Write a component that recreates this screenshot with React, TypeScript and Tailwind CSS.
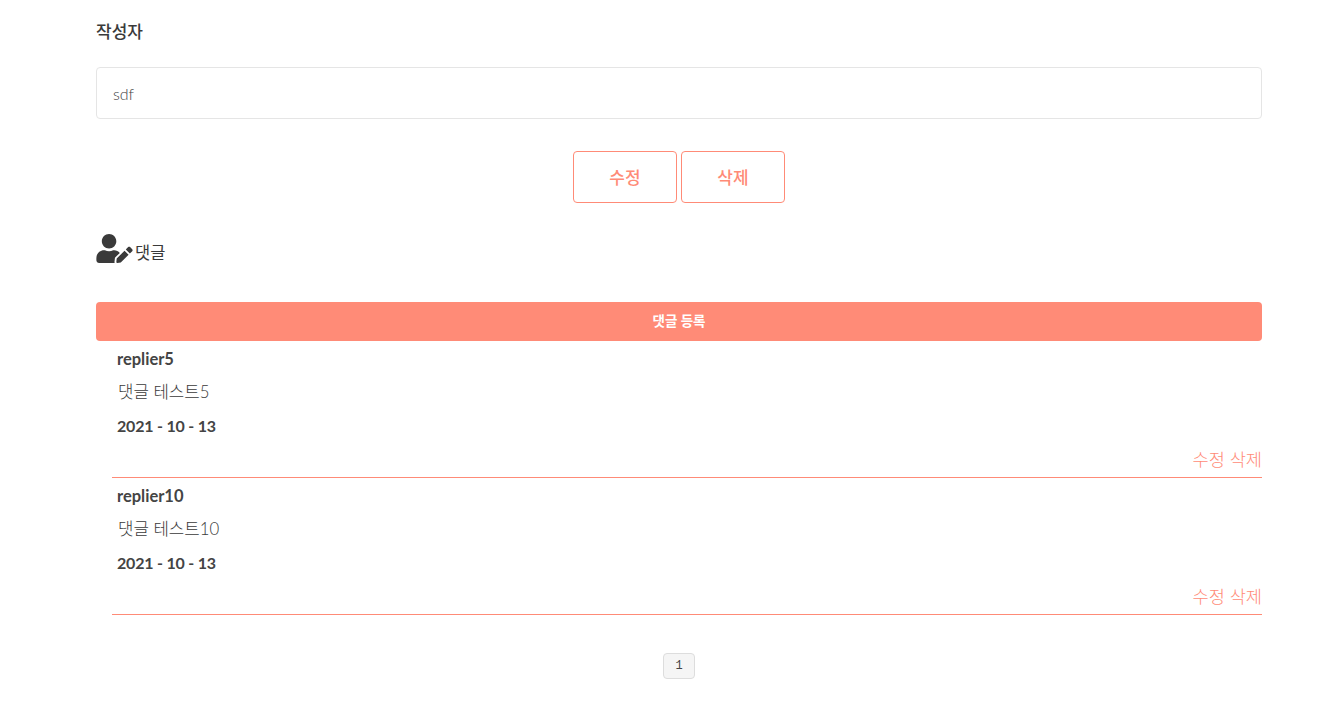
import { FaUserEdit } from 'react-icons/fa';

const font = "font-['Lato','Noto_Sans_CJK_KR',sans-serif]";

const replies = [
  { id: 5, writer: 'replier5', content: '댓글 테스트5', date: '2021 - 10 - 13' },
  { id: 10, writer: 'replier10', content: '댓글 테스트10', date: '2021 - 10 - 13' },
];

function ReplyItem({ writer, content, date }: { writer: string; content: string; date: string }) {
  return (
    <div className="ml-4 h-[137px] border-b border-[#ff8b77] flex flex-col">
      <p className="pl-[5px] mt-[8px] h-[20px] leading-[20px] text-[16.5px] font-bold text-[#444]">{writer}</p>
      <p className="pl-[6px] mt-[13px] h-[20px] leading-[20px] text-[16.8px] font-light text-[#3a3a3a]">{content}</p>
      <p className="pl-[5px] mt-[14px] h-[20px] leading-[20px] text-[16px] tracking-[-0.2px] font-bold text-[#444]">{date}</p>
      <div className="mt-[14px] h-[20px] leading-[20px] text-right text-[17.6px] font-light text-[#ff8b77]">
        <span>수정</span> <span>삭제</span>
      </div>
    </div>
  );
}

export default function App() {
  return (
    <div className={`${font} h-[702px] overflow-hidden bg-white pl-[96px] pr-[82px] text-[#3a3a3a]`}>
      <h3 className="pt-[22px] h-[67px] text-[17px] leading-[20px] font-medium text-[#3a3a3a]">작성자</h3>
      <div className="h-[52px] rounded border border-[#e5e5e5] px-4 pt-[1px] flex items-center text-[16px] font-light text-[#444]">
        sdf
      </div>
      <div className="mt-8 flex justify-center gap-1">
        <button className="w-[104px] h-[52px] rounded border border-[#ff8b77] pt-[1px] text-[17px] font-medium text-[#ff8b77]">수정</button>
        <button className="w-[104px] h-[52px] rounded border border-[#ff8b77] pt-[1px] text-[17px] font-medium text-[#ff8b77]">삭제</button>
      </div>
      <div className="mt-[30px] h-[30px] flex items-center gap-[2px]">
        <FaUserEdit className="w-[37px] h-[29px] text-[#3a3a3a]" />
        <span className="self-end leading-[20px] text-[16.5px] font-normal text-[#3a3a3a]">댓글</span>
      </div>
      <button className="mt-[39px] block w-full h-[39px] rounded bg-[#ff8b77] text-[13.5px] font-bold text-white">댓글 등록</button>
      {replies.map((r) => (
        <ReplyItem key={r.id} writer={r.writer} content={r.content} date={r.date} />
      ))}
      <div className="mt-[38px] flex justify-center">
        <span className="w-8 h-[26px] rounded border border-[#dddddd] bg-[#f5f5f5] flex items-center justify-center text-[12px] font-['Liberation_Mono',monospace] text-[#444]">1</span>
      </div>
    </div>
  );
}
